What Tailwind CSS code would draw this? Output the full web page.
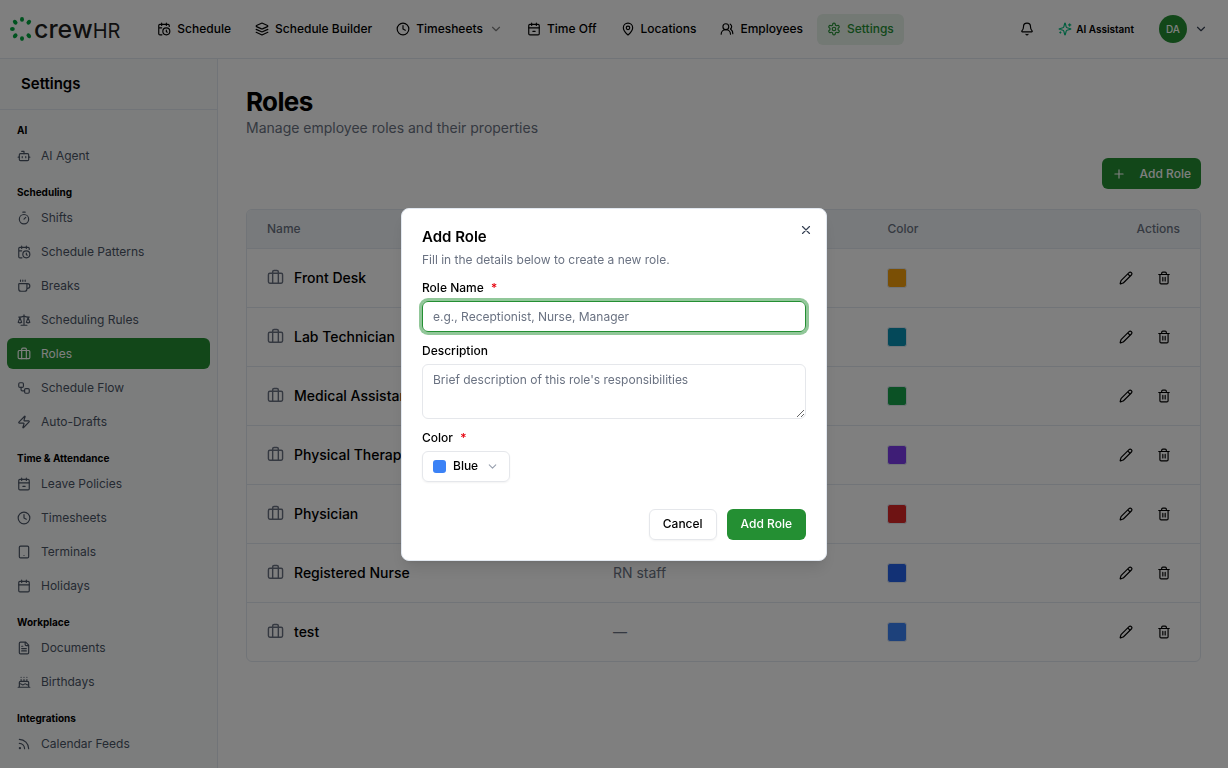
<!DOCTYPE html>
<html lang="en">
<head>
    <meta charset="UTF-8">
    <meta name="viewport" content="width=device-width, initial-scale=1">
    <title>Roles - crewHR</title>
    <script src="https://cdn.jsdelivr.net/npm/@tailwindcss/browser@4"></script>
</head>
<body class="h-screen overflow-hidden bg-white fill-none stroke-current stroke-2 text-black font-['Inter',sans-serif] text-[12px] [stroke-linecap:round] [stroke-linejoin:round]">

    <!-- Icon sprite -->
    <svg class="hidden">
        <symbol id="calendar-clock" viewBox="0 0 24 24"><path d="M21 7.5V6a2 2 0 0 0-2-2H5a2 2 0 0 0-2 2v14a2 2 0 0 0 2 2h3.5M16 2v4M8 2v4M3 10h5M17.5 17.5 16 16.3V14"/><circle cx="16" cy="16" r="6"/></symbol>
        <symbol id="layers" viewBox="0 0 24 24"><path d="m12.83 2.18a2 2 0 0 0-1.66 0L2.6 6.08a1 1 0 0 0 0 1.83l8.58 3.91a2 2 0 0 0 1.66 0l8.58-3.9a1 1 0 0 0 0-1.83ZM22 17.65l-9.17 4.16a2 2 0 0 1-1.66 0L2 17.65M22 12.65l-9.17 4.16a2 2 0 0 1-1.66 0L2 12.65"/></symbol>
        <symbol id="clock" viewBox="0 0 24 24"><circle cx="12" cy="12" r="10"/><path d="M12 6v6l4 2"/></symbol>
        <symbol id="chevron-down" viewBox="0 0 24 24"><path d="m6 9 6 6 6-6"/></symbol>
        <symbol id="calendar-minus" viewBox="0 0 24 24"><path d="M8 2v4M16 2v4M3 10h18M10 16h4"/><rect width="18" height="18" x="3" y="4" rx="2"/></symbol>
        <symbol id="calendar" viewBox="0 0 24 24"><path d="M8 2v4M16 2v4M3 10h18"/><rect width="18" height="18" x="3" y="4" rx="2"/></symbol>
        <symbol id="map-pin" viewBox="0 0 24 24"><path d="M20 10c0 4.993-5.539 10.193-7.399 11.799a1 1 0 0 1-1.202 0C9.539 20.193 4 14.993 4 10a8 8 0 0 1 16 0"/><circle cx="12" cy="10" r="3"/></symbol>
        <symbol id="users" viewBox="0 0 24 24"><path d="M18 21a8 8 0 0 0-16 0"/><circle cx="10" cy="8" r="5"/><path d="M22 20c0-3.37-2-6.5-4-8a5 5 0 0 0-.45-8.3"/></symbol>
        <symbol id="settings" viewBox="0 0 24 24"><path d="M12.22 2h-.44a2 2 0 0 0-2 2v.18a2 2 0 0 1-1 1.73l-.43.25a2 2 0 0 1-2 0l-.15-.08a2 2 0 0 0-2.73.73l-.22.38a2 2 0 0 0 .73 2.73l.15.1a2 2 0 0 1 1 1.72v.51a2 2 0 0 1-1 1.74l-.15.09a2 2 0 0 0-.73 2.73l.22.38a2 2 0 0 0 2.73.73l.15-.08a2 2 0 0 1 2 0l.43.25a2 2 0 0 1 1 1.73V20a2 2 0 0 0 2 2h.44a2 2 0 0 0 2-2v-.18a2 2 0 0 1 1-1.73l.43-.25a2 2 0 0 1 2 0l.15.08a2 2 0 0 0 2.73-.73l.22-.39a2 2 0 0 0-.73-2.73l-.15-.08a2 2 0 0 1-1-1.74v-.5a2 2 0 0 1 1-1.74l.15-.09a2 2 0 0 0 .73-2.73l-.22-.38a2 2 0 0 0-2.73-.73l-.15.08a2 2 0 0 1-2 0l-.43-.25a2 2 0 0 1-1-1.73V4a2 2 0 0 0-2-2z"/><circle cx="12" cy="12" r="3"/></symbol>
        <symbol id="bell" viewBox="0 0 24 24"><path d="M10.268 21a2 2 0 0 0 3.464 0M3.262 15.326A1 1 0 0 0 4 17h16a1 1 0 0 0 .74-1.673C19.41 13.956 18 12.499 18 8A6 6 0 0 0 6 8c0 4.499-1.411 5.956-2.738 7.326"/></symbol>
        <symbol id="sparkles" viewBox="0 0 24 24"><path d="M9.937 15.5A2 2 0 0 0 8.5 14.063l-6.135-1.582a.5.5 0 0 1 0-.962L8.5 9.936A2 2 0 0 0 9.937 8.5l1.582-6.135a.5.5 0 0 1 .963 0L14.063 8.5A2 2 0 0 0 15.5 9.937l6.135 1.581a.5.5 0 0 1 0 .964L15.5 14.063a2 2 0 0 0-1.437 1.437l-1.582 6.135a.5.5 0 0 1-.963 0zM20 3v4M22 5h-4M4 17v2M5 18H3"/></symbol>
        <symbol id="bot" viewBox="0 0 24 24"><path d="M12 8V4H8M2 14h2M20 14h2M15 13v2M9 13v2"/><rect width="16" height="12" x="4" y="8" rx="2"/></symbol>
        <symbol id="timer" viewBox="0 0 24 24"><path d="M10 2h4M12 14l3-3"/><circle cx="12" cy="14" r="8"/></symbol>
        <symbol id="coffee" viewBox="0 0 24 24"><path d="M10 2v2M14 2v2M6 2v2M16 8a1 1 0 0 1 1 1v8a4 4 0 0 1-4 4H7a4 4 0 0 1-4-4V9a1 1 0 0 1 1-1h14a4 4 0 1 1 0 8h-1"/></symbol>
        <symbol id="scale" viewBox="0 0 24 24"><path d="m16 16 3-8 3 8c-.87.65-1.92 1-3 1s-2.13-.35-3-1ZM2 16l3-8 3 8c-.87.65-1.92 1-3 1s-2.13-.35-3-1ZM7 21h10M12 3v18M3 7h2c2 0 5-1 7-2 2 1 5 2 7 2h2"/></symbol>
        <symbol id="briefcase" viewBox="0 0 24 24"><path d="M16 20V4a2 2 0 0 0-2-2h-4a2 2 0 0 0-2 2v16"/><rect width="20" height="14" x="2" y="6" rx="2"/></symbol>
        <symbol id="workflow" viewBox="0 0 24 24"><rect width="8" height="8" x="3" y="3" rx="2"/><path d="M7 11v4a2 2 0 0 0 2 2h4"/><rect width="8" height="8" x="13" y="13" rx="2"/></symbol>
        <symbol id="zap" viewBox="0 0 24 24"><path d="M4 14a1 1 0 0 1-.78-1.63l9.9-10.2a.5.5 0 0 1 .86.46l-1.92 6.02A1 1 0 0 0 13 10h7a1 1 0 0 1 .78 1.63l-9.9 10.2a.5.5 0 0 1-.86-.46l1.92-6.02A1 1 0 0 0 11 14z"/></symbol>
        <symbol id="tablet" viewBox="0 0 24 24"><rect width="16" height="20" x="4" y="2" rx="2"/><path d="M12 18h.01"/></symbol>
        <symbol id="file-text" viewBox="0 0 24 24"><path d="M15 2H6a2 2 0 0 0-2 2v16a2 2 0 0 0 2 2h12a2 2 0 0 0 2-2V7ZM14 2v4a2 2 0 0 0 2 2h4M10 9H8M16 13H8M16 17H8"/></symbol>
        <symbol id="cake" viewBox="0 0 24 24"><path d="M20 21v-8a2 2 0 0 0-2-2H6a2 2 0 0 0-2 2v8M4 16s.5-1 2-1 2.5 2 4 2 2.5-2 4-2 2.5 2 4 2 2-1 2-1M2 21h20M7 8v3M12 8v3M17 8v3M7 4h.01M12 4h.01M17 4h.01"/></symbol>
        <symbol id="rss" viewBox="0 0 24 24"><path d="M4 11a9 9 0 0 1 9 9M4 4a16 16 0 0 1 16 16"/><circle cx="5" cy="19" r="1"/></symbol>
        <symbol id="plus" viewBox="0 0 24 24"><path d="M5 12h14M12 5v14"/></symbol>
        <symbol id="x" viewBox="0 0 24 24"><path d="M18 6 6 18M6 6l12 12"/></symbol>
        <symbol id="pencil" viewBox="0 0 24 24"><path d="M21.174 6.812a1 1 0 0 0-3.986-3.987L3.842 16.174a2 2 0 0 0-.5.83l-1.321 4.352a.5.5 0 0 0 .623.622l4.353-1.32a2 2 0 0 0 .83-.497zM15 5l4 4"/></symbol>
        <symbol id="trash" viewBox="0 0 24 24"><path d="M3 6h18M19 6v14a2 2 0 0 1-2 2H7a2 2 0 0 1-2-2V6M8 6V4a2 2 0 0 1 2-2h4a2 2 0 0 1 2 2v2M10 11v6M14 11v6"/></symbol>
    </svg>

    <div class="flex h-full flex-col">
        <header class="flex h-[59px] shrink-0 items-center border-b border-slate-200 pl-[10px] pr-5">
            <a href="#" class="flex items-center text-[#1f1f1f]" aria-label="crewHR">
                <svg class="size-6 fill-green-600 stroke-none" viewBox="0 0 24 24">
                    <ellipse cx="12" cy="2.4" rx="2" ry="2.4"/>
                    <ellipse cx="12" cy="2.4" rx="2" ry="2.6" transform="rotate(45 12 12)"/>
                    <ellipse cx="12" cy="2.4" rx="2" ry="2.6" transform="rotate(135 12 12)"/>
                    <ellipse cx="12" cy="2.4" rx="2" ry="2.4" transform="rotate(180 12 12)"/>
                    <ellipse cx="12" cy="2.4" rx="2" ry="2.6" transform="rotate(225 12 12)"/>
                    <ellipse cx="12" cy="2.4" rx="2" ry="2.4" transform="rotate(270 12 12)"/>
                    <ellipse cx="12" cy="2.4" rx="2" ry="2.6" transform="rotate(315 12 12)"/>
                </svg>
                <span class="flex items-baseline leading-none"><span class="text-[25px] font-medium">crew</span><span class="text-[20px]">HR</span></span>
            </a>

            <nav class="ml-[27px] flex gap-1 text-[13px] font-medium">
                <a href="#" class="flex h-[31px] items-center gap-[6px] rounded-md px-[10px] text-[12px]"><svg class="size-[14px]"><use href="#calendar-clock"/></svg>Schedule</a>
                <a href="#" class="flex h-[31px] items-center gap-[6px] rounded-md px-[10px] text-[12px]"><svg class="size-[14px]"><use href="#layers"/></svg>Schedule Builder</a>
                <button class="flex h-[31px] items-center gap-[6px] rounded-md px-[10px] text-[12px]"><svg class="size-[14px]"><use href="#clock"/></svg>Timesheets<svg class="size-[14px] opacity-50"><use href="#chevron-down"/></svg></button>
                <a href="#" class="flex h-[31px] items-center gap-[6px] rounded-md px-[10px] text-[12px]"><svg class="size-[14px]"><use href="#calendar-minus"/></svg>Time Off</a>
                <a href="#" class="flex h-[31px] items-center gap-[6px] rounded-md px-[10px] text-[12px]"><svg class="size-[14px]"><use href="#map-pin"/></svg>Locations</a>
                <a href="#" class="flex h-[31px] items-center gap-[6px] rounded-md px-[10px] text-[12px]"><svg class="size-[14px]"><use href="#users"/></svg>Employees</a>
                <a href="#" class="flex h-[31px] items-center gap-[6px] rounded-md bg-[#e6f2e8] px-[10px] text-[12px] text-[#248f33]"><svg class="size-[14px]"><use href="#settings"/></svg>Settings</a>
            </nav>

            <div class="ml-auto flex items-center">
                <button aria-label="Notifications"><svg class="size-[14px]"><use href="#bell"/></svg></button>
                <button class="ml-6 flex items-center gap-1 text-[10px] font-semibold"><svg class="size-[14px] text-emerald-500"><use href="#sparkles"/></svg>AI Assistant</button>
                <button class="ml-[25px] flex items-center gap-[7px]" aria-label="Account">
                    <span class="flex size-[28px] items-center justify-center rounded-full bg-[#248f33] text-[10px] font-medium text-white">DA</span>
                    <svg class="size-[14px] text-gray-700"><use href="#chevron-down"/></svg>
                </button>
            </div>
        </header>

        <div class="flex min-h-0 flex-1">
            <aside class="w-[218px] shrink-0 overflow-hidden border-r border-slate-200 bg-[#f9fafb]">
                <h2 class="flex h-[51px] items-center border-b border-slate-200 px-[21px] text-[15px] font-semibold">Settings</h2>
                <nav class="flex flex-col gap-[13px] px-[7px] pt-3 text-gray-600">
                    <section>
                        <h3 class="mb-[2px] px-[10px] text-[10px] leading-4 font-bold text-black">AI</h3>
                        <a href="#" class="flex h-[31px] items-center gap-[10px] rounded-md px-[10px]"><svg class="size-[14px]"><use href="#bot"/></svg>AI Agent</a>
                    </section>
                    <section>
                        <h3 class="mb-[2px] px-[10px] text-[10px] leading-4 font-bold text-black">Scheduling</h3>
                        <div class="flex flex-col gap-[3px]">
                            <a href="#" class="flex h-[31px] items-center gap-[10px] rounded-md px-[10px]"><svg class="size-[14px]"><use href="#timer"/></svg>Shifts</a>
                            <a href="#" class="flex h-[31px] items-center gap-[10px] rounded-md px-[10px]"><svg class="size-[14px]"><use href="#calendar-clock"/></svg>Schedule Patterns</a>
                            <a href="#" class="flex h-[31px] items-center gap-[10px] rounded-md px-[10px]"><svg class="size-[14px]"><use href="#coffee"/></svg>Breaks</a>
                            <a href="#" class="flex h-[31px] items-center gap-[10px] rounded-md px-[10px]"><svg class="size-[14px]"><use href="#scale"/></svg>Scheduling Rules</a>
                            <a href="#" class="flex h-[31px] items-center gap-[10px] rounded-md bg-[#248f33] px-[10px] text-white"><svg class="size-[14px]"><use href="#briefcase"/></svg>Roles</a>
                            <a href="#" class="flex h-[31px] items-center gap-[10px] rounded-md px-[10px]"><svg class="size-[14px]"><use href="#workflow"/></svg>Schedule Flow</a>
                            <a href="#" class="flex h-[31px] items-center gap-[10px] rounded-md px-[10px]"><svg class="size-[14px]"><use href="#zap"/></svg>Auto-Drafts</a>
                        </div>
                    </section>
                    <section>
                        <h3 class="mb-[2px] px-[10px] text-[10px] leading-4 font-bold text-black">Time &amp; Attendance</h3>
                        <div class="flex flex-col gap-[3px]">
                            <a href="#" class="flex h-[31px] items-center gap-[10px] rounded-md px-[10px]"><svg class="size-[14px]"><use href="#calendar-minus"/></svg>Leave Policies</a>
                            <a href="#" class="flex h-[31px] items-center gap-[10px] rounded-md px-[10px]"><svg class="size-[14px]"><use href="#clock"/></svg>Timesheets</a>
                            <a href="#" class="flex h-[31px] items-center gap-[10px] rounded-md px-[10px]"><svg class="size-[14px]"><use href="#tablet"/></svg>Terminals</a>
                            <a href="#" class="flex h-[31px] items-center gap-[10px] rounded-md px-[10px]"><svg class="size-[14px]"><use href="#calendar"/></svg>Holidays</a>
                        </div>
                    </section>
                    <section>
                        <h3 class="mb-[2px] px-[10px] text-[10px] leading-4 font-bold text-black">Workplace</h3>
                        <div class="flex flex-col gap-[3px]">
                            <a href="#" class="flex h-[31px] items-center gap-[10px] rounded-md px-[10px]"><svg class="size-[14px]"><use href="#file-text"/></svg>Documents</a>
                            <a href="#" class="flex h-[31px] items-center gap-[10px] rounded-md px-[10px]"><svg class="size-[14px]"><use href="#cake"/></svg>Birthdays</a>
                        </div>
                    </section>
                    <section>
                        <h3 class="mb-[2px] px-[10px] text-[10px] leading-4 font-bold text-black">Integrations</h3>
                        <a href="#" class="flex h-[31px] items-center gap-[10px] rounded-md px-[10px]"><svg class="size-[14px]"><use href="#rss"/></svg>Calendar Feeds</a>
                    </section>
                </nav>
            </aside>

            <main class="flex-1 pt-[27px] pr-[27px] pl-7">
                <h1 class="text-[26px] leading-8 font-bold tracking-tight">Roles</h1>
                <p class="text-[14px] leading-5 text-gray-500">Manage employee roles and their properties</p>
                <div class="mt-5 flex justify-end">
                    <button class="flex h-[31px] items-center gap-[14px] rounded-md bg-[#248f33] px-[10px] font-medium text-white"><svg class="size-[14px]"><use href="#plus"/></svg>Add Role</button>
                </div>
                <div class="mt-5 overflow-hidden rounded-md border border-slate-200">
                    <table class="w-full table-fixed text-left text-[14px]">
                        <thead class="bg-slate-100 text-[12px] text-gray-500">
                            <tr class="h-[38px] border-b border-slate-200">
                                <th class="w-[36.3%] px-5 font-medium">Name</th>
                                <th class="w-[28.8%] px-5 font-medium">Description</th>
                                <th class="px-5 font-medium">Color</th>
                                <th class="px-5 text-right font-medium">Actions</th>
                            </tr>
                        </thead>
                        <tbody id="roles"></tbody>
                    </table>
                </div>
            </main>
        </div>
    </div>

    <!-- Add role dialog -->
    <div class="fixed inset-0 flex items-center justify-center bg-black/50">
        <div role="dialog" aria-modal="true" aria-labelledby="dialog-title" class="relative w-full max-w-[426px] rounded-lg border border-slate-200 bg-white p-5 shadow-lg">
            <button aria-label="Close" class="absolute top-[14px] right-[13px] text-gray-700"><svg class="size-[14px]"><use href="#x"/></svg></button>
            <h2 id="dialog-title" class="text-[15px] leading-4 font-semibold">Add Role</h2>
            <p class="mt-[7px] leading-4 text-gray-500">Fill in the details below to create a new role.</p>
            <form class="mt-3">
                <label for="role-name" class="block leading-4 font-medium">Role Name <span class="ml-1 text-red-600">*</span></label>
                <input id="role-name" type="text" placeholder="e.g., Receptionist, Nurse, Manager" class="mt-[5px] block h-[31px] w-full rounded-md border border-[#248f33] px-[10px] ring-3 ring-[#248f33]/50 outline-none placeholder:text-gray-500">
                <label for="description" class="mt-[11px] block leading-4 font-medium">Description</label>
                <textarea id="description" placeholder="Brief description of this role's responsibilities" class="mt-[5px] block h-[55px] w-full rounded-md border border-gray-200 px-[10px] py-[7px] leading-4 placeholder:text-gray-500"></textarea>
                <label for="color" class="mt-[11px] block leading-4 font-medium">Color <span class="ml-1 text-red-600">*</span></label>
                <div class="relative mt-[5px] w-[88px]">
                    <select id="color" class="h-[31px] w-full appearance-none rounded-md border border-gray-200 pl-[30px] font-medium shadow-xs">
                        <option>Blue</option>
                        <option>Green</option>
                        <option>Red</option>
                    </select>
                    <span class="pointer-events-none absolute top-[9px] left-[11px] size-[13px] rounded-[3px] bg-[#3b82f6]"></span>
                    <svg class="pointer-events-none absolute top-[9px] right-[11px] size-[13px] text-gray-400"><use href="#chevron-down"/></svg>
                </div>
                <div class="mt-[27px] flex justify-end gap-[10px]">
                    <button type="button" class="h-[31px] rounded-md border border-gray-200 px-[13px] font-medium shadow-xs">Cancel</button>
                    <button type="submit" class="h-[31px] rounded-md bg-[#248f33] px-[14px] font-medium text-white">Add Role</button>
                </div>
            </form>
        </div>
    </div>

    <script>
        const roles = [
            { name: 'Front Desk', description: 'Reception staff', color: '#f59e0b' },
            { name: 'Lab Technician', description: 'Lab staff', color: '#0891b2' },
            { name: 'Medical Assistant', description: 'MA staff', color: '#16a34a' },
            { name: 'Physical Therapist', description: 'PT staff', color: '#7c3aed' },
            { name: 'Physician', description: 'MD staff', color: '#dc2626' },
            { name: 'Registered Nurse', description: 'RN staff', color: '#2563eb' },
            { name: 'test', description: '—', color: '#3b82f6' }
        ];

        document.getElementById('roles').innerHTML = roles.map(role => `
            <tr class="h-[59px] border-b border-slate-200 last:border-b-0">
                <td class="px-5 font-medium"><div class="flex items-center gap-[10px] whitespace-nowrap"><svg class="size-[17px] text-gray-500"><use href="#briefcase"/></svg>${role.name}</div></td>
                <td class="px-5 text-gray-500">${role.description}</td>
                <td class="px-5"><div class="size-5 rounded-[3px] border border-slate-200" style="background-color: ${role.color}"></div></td>
                <td class="px-5">
                    <div class="flex justify-end gap-6 pr-[9px]">
                        <button aria-label="Edit ${role.name}"><svg class="size-[14px]"><use href="#pencil"/></svg></button>
                        <button aria-label="Delete ${role.name}"><svg class="size-[14px]"><use href="#trash"/></svg></button>
                    </div>
                </td>
            </tr>`).join('');
    </script>
</body>
</html>
